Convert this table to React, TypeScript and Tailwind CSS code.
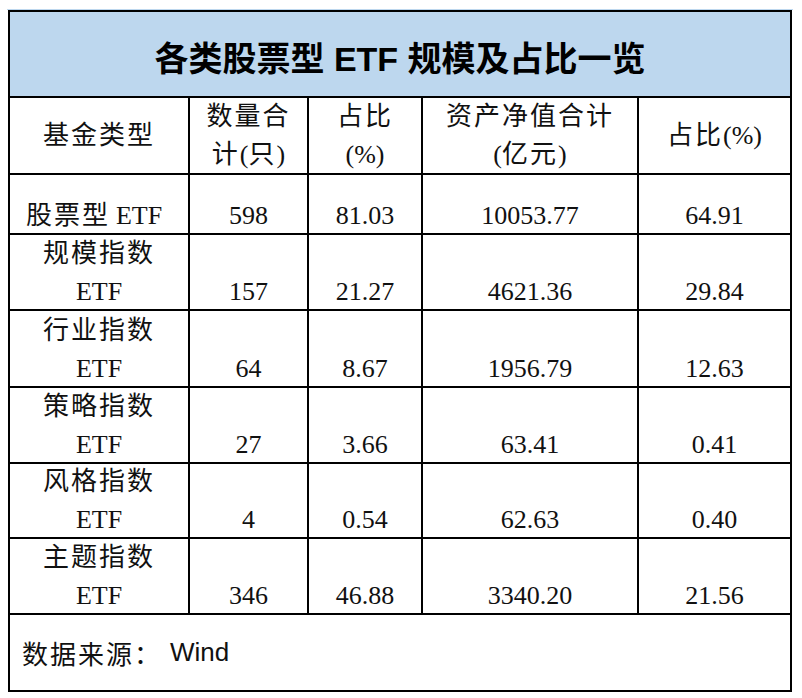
import type { ReactNode } from "react";

const SERIF = "font-['Liberation_Serif','Noto_Sans_CJK_SC',serif]";

const ROWS = [
  { name: "股票型", single: true, count: "598", share: "81.03", nav: "10053.77", navShare: "64.91" },
  { name: "规模指数", count: "157", share: "21.27", nav: "4621.36", navShare: "29.84" },
  { name: "行业指数", count: "64", share: "8.67", nav: "1956.79", navShare: "12.63" },
  { name: "策略指数", count: "27", share: "3.66", nav: "63.41", navShare: "0.41" },
  { name: "风格指数", count: "4", share: "0.54", nav: "62.63", navShare: "0.40" },
  { name: "主题指数", count: "346", share: "46.88", nav: "3340.20", navShare: "21.56" },
];

// CJK runs get a little extra spacing, like the Song face in the original
function Zh({ children }: { children: ReactNode }) {
  return <span className="tracking-[2px]">{children}</span>;
}

function HeadCell({ children }: { children: ReactNode }) {
  return (
    <div className="flex flex-col items-center justify-center bg-white text-[26px] leading-[38px] text-[#111]">
      {children}
    </div>
  );
}

function DataCell({ children }: { children: ReactNode }) {
  return (
    <div className="flex flex-col items-center justify-end bg-white text-[26px] leading-[38px] text-[#111]">
      <div className="-mb-[2px] flex flex-col items-center">{children}</div>
    </div>
  );
}

export default function App() {
  return (
    <div className={`min-h-screen bg-white pt-[9px] ${SERIF}`}>
      <div className="ml-[7px] h-[1px] w-[786px] bg-[#BDD7EE]" />
      <div className="ml-[8px] grid w-[784px] grid-cols-[178px_117px_112px_214px_151px] grid-rows-[84px_75px_58px_74px_75px_74px_73px_74px_75px] gap-[2px] bg-black p-[2px]">
        {/* title */}
        <div className="col-span-5 flex items-center justify-center bg-[#BDD7EE] pt-[10px] font-['Liberation_Sans','Noto_Sans_CJK_SC',sans-serif] text-[34px] font-bold text-black">
          各类股票型 ETF 规模及占比一览
        </div>

        {/* header */}
        <HeadCell>
          <Zh>基金类型</Zh>
        </HeadCell>
        <HeadCell>
          <Zh>数量合</Zh>
          <span>
            <Zh>计</Zh>(<Zh>只</Zh>)
          </span>
        </HeadCell>
        <HeadCell>
          <Zh>占比</Zh>
          <span>(%)</span>
        </HeadCell>
        <HeadCell>
          <Zh>资产净值合计</Zh>
          <span>
            (<Zh>亿元</Zh>)
          </span>
        </HeadCell>
        <HeadCell>
          <span>
            <Zh>占比</Zh>(%)
          </span>
        </HeadCell>

        {ROWS.map((r) => (
          <div key={r.name} className="contents">
            <DataCell>
              {r.single ? (
                <span className="-ml-[10px]">
                  <Zh>{r.name}</Zh>
                  <span className="ml-[6px]">ETF</span>
                </span>
              ) : (
                <>
                  <Zh>{r.name}</Zh>
                  <span>ETF</span>
                </>
              )}
            </DataCell>
            <DataCell>{r.count}</DataCell>
            <DataCell>{r.share}</DataCell>
            <DataCell>{r.nav}</DataCell>
            <DataCell>{r.navShare}</DataCell>
          </div>
        ))}

        {/* source */}
        <div className="col-span-5 flex items-center bg-white pl-[12px] text-[26px] text-[#111]">
          <span className="font-['Noto_Sans_CJK_SC',sans-serif] tracking-[2px]">数据来源：</span>
          <span className="ml-[8px] font-['Liberation_Sans',sans-serif]">Wind</span>
        </div>
      </div>
    </div>
  );
}
